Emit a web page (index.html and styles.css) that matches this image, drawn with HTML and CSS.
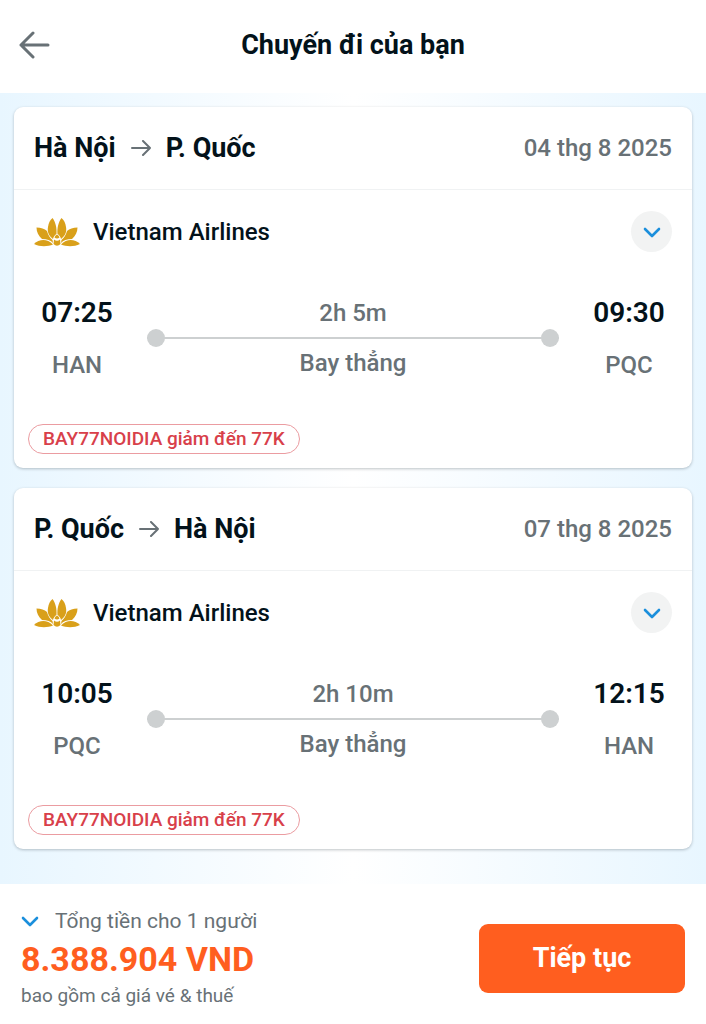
FILE: index.html
```html
<!DOCTYPE html>
<html lang="vi">
<head>
  <meta charset="UTF-8">
  <meta name="viewport" content="width=device-width, initial-scale=1.0">
  <title>Chuyến đi của bạn</title>
  <link rel="stylesheet" href="styles.css">
</head>
<body>
  <!-- shared icons -->
  <svg class="sprite" aria-hidden="true">
    <symbol id="icon-arrow" viewBox="0 0 20 16">
      <path d="M1 8h18M12 1l7 7-7 7" fill="none" stroke="#687176" stroke-width="2" stroke-linecap="round" stroke-linejoin="round"/>
    </symbol>
    <symbol id="icon-chevron" viewBox="0 0 18 12">
      <path d="M2 3l7 7 7-7" fill="none" stroke="#1b8fdc" stroke-width="2.600" stroke-linecap="round" stroke-linejoin="round"/>
    </symbol>
    <symbol id="icon-lotus" viewBox="0 0 46 30">
      <g fill="#d9a01a">
        <path d="M22.500 17C21 18 19.500 19.500 19 22C15 19 13 15 14 10C14.500 6 16 3 18.500 1C21.500 5 23 11 22.500 17Z"/>
        <path d="M23.500 17C25 18 26.500 19.500 27 22C31 19 33 15 32 10C31.500 6 30 3 27.500 1C24.500 5 23 11 23.500 17Z"/>
        <path d="M13 14C14 18 16 21 18.500 23L19 26C17 23.500 13 22 8 22C4.500 19 2.500 15 2.500 10.500C7 10.500 10.500 12 13 14Z"/>
        <path d="M33 14C32 18 30 21 27.500 23L27 26C29 23.500 33 22 38 22C41.500 19 43.500 15 43.500 10.500C39 10.500 35.500 12 33 14Z"/>
        <path d="M0 27C5 22 13 21 19 27.500C14 29.500 6 30 0 27Z"/>
        <path d="M46 27C41 22 33 21 27 27.500C32 29.500 40 30 46 27Z"/>
        <path d="M20 22.500Q23 25 26 22.500L26.500 27Q23 30.500 19.500 27Z"/>
        <path d="M20.500 20.500Q21 18.500 23 17.500Q25 18.500 25.500 20.500Q23 22.500 20.500 20.500Z"/>
      </g>
    </symbol>
  </svg>

  <header class="header">
    <button type="button" class="back-button" aria-label="Quay lại">
      <svg width="32" height="28" viewBox="0 0 32 28">
        <path d="M30 14H3M15 2L3 14l12 12" fill="none" stroke="#687176" stroke-width="3" stroke-linecap="round" stroke-linejoin="round"/>
      </svg>
    </button>
    <h1>Chuyến đi của bạn</h1>
  </header>

  <main class="trips">
    <section class="card">
      <div class="card-head">
        <h2>Hà Nội <svg class="arrow"><use href="#icon-arrow"/></svg> P. Quốc</h2>
        <span class="date">04 thg 8 2025</span>
      </div>
      <div class="airline">
        <svg class="logo"><use href="#icon-lotus"/></svg>
        <span>Vietnam Airlines</span>
        <button type="button" class="expand-button" aria-label="Xem chi tiết">
          <svg class="chevron"><use href="#icon-chevron"/></svg>
        </button>
      </div>
      <div class="route">
        <div class="stop">
          <strong>07:25</strong>
          <span>HAN</span>
        </div>
        <div class="flight">
          <span>2h 5m</span>
          <div class="line"></div>
          <span>Bay thẳng</span>
        </div>
        <div class="stop">
          <strong>09:30</strong>
          <span>PQC</span>
        </div>
      </div>
      <span class="promo">BAY77NOIDIA giảm đến 77K</span>
    </section>

    <section class="card">
      <div class="card-head">
        <h2>P. Quốc <svg class="arrow"><use href="#icon-arrow"/></svg> Hà Nội</h2>
        <span class="date">07 thg 8 2025</span>
      </div>
      <div class="airline">
        <svg class="logo"><use href="#icon-lotus"/></svg>
        <span>Vietnam Airlines</span>
        <button type="button" class="expand-button" aria-label="Xem chi tiết">
          <svg class="chevron"><use href="#icon-chevron"/></svg>
        </button>
      </div>
      <div class="route">
        <div class="stop">
          <strong>10:05</strong>
          <span>PQC</span>
        </div>
        <div class="flight">
          <span>2h 10m</span>
          <div class="line"></div>
          <span>Bay thẳng</span>
        </div>
        <div class="stop">
          <strong>12:15</strong>
          <span>HAN</span>
        </div>
      </div>
      <span class="promo">BAY77NOIDIA giảm đến 77K</span>
    </section>
  </main>

  <footer class="footer">
    <div class="total">
      <button type="button" class="total-toggle">
        <svg class="chevron"><use href="#icon-chevron"/></svg>
        Tổng tiền cho 1 người
      </button>
      <strong class="price">8.388.904 VND</strong>
      <span class="note">bao gồm cả giá vé &amp; thuế</span>
    </div>
    <button type="button" class="continue-button">Tiếp tục</button>
  </footer>
</body>
</html>
```
FILE: styles.css
```css
* {
  box-sizing: border-box;
}
body {
  margin: 0;
  min-height: 100vh;
  display: flex;
  flex-direction: column;
  font-family: Roboto, "Liberation Sans", sans-serif;
  font-size: 24px;
  font-weight: 500;
  color: #03121a;
  background-color: #fff;
}
button {
  padding: 0;
  border: none;
  background: none;
  font: inherit;
  color: inherit;
  cursor: pointer;
}
svg {
  display: block;
  flex-shrink: 0;
}
h1, h2 {
  margin: 0;
  font-size: 27px;
  font-weight: 700;
  line-height: 32px;
}
.sprite {
  width: 0;
  height: 0;
  position: absolute;
}
.header {
  display: grid;
  grid-template-columns: 32px 1fr 32px;
  align-items: center;
  padding: 29px 18px 32px;
}
.header h1 {
  text-align: center;
}
.trips {
  flex: 1;
  display: flex;
  flex-direction: column;
  gap: 20px;
  padding: 14px 14px 33px;
  background: linear-gradient(to right, #e8f6ff, #fff 50%, #e8f6ff);
}
.card {
  padding-bottom: 14px;
  background-color: #fff;
  border-radius: 9px;
  box-shadow: 0 1px 3px rgba(3, 18, 26, 0.25);
}
.card-head {
  display: flex;
  justify-content: space-between;
  align-items: center;
  padding: 25px 20px;
  border-bottom: 1px solid #f0f2f3;
}
.card-head h2 {
  display: flex;
  align-items: center;
  gap: 15px;
}
.arrow {
  width: 20px;
  height: 16px;
}
.date {
  line-height: 32px;
  color: #687176;
}
.airline {
  display: flex;
  align-items: center;
  gap: 13px;
  padding: 21px 20px 0;
}
.logo {
  width: 46px;
  height: 30px;
}
.expand-button {
  display: grid;
  place-items: center;
  width: 41px;
  height: 41px;
  margin-left: auto;
  border-radius: 50%;
  background-color: #f2f3f3;
}
.chevron {
  width: 18px;
  height: 12px;
}
.route {
  display: flex;
  gap: 21px;
  padding: 45px 14px 42px;
  line-height: 32px;
  text-align: center;
  color: #687176;
}
.stop {
  display: flex;
  flex-direction: column;
  gap: 20px;
  width: 98px;
}
.stop strong {
  font-size: 28px;
  font-weight: 600;
  color: #03121a;
}
.flight {
  flex: 1;
}
.flight span {
  display: block;
}
/* line with a dot at each end */
.line {
  display: flex;
  justify-content: space-between;
  align-items: center;
  height: 18px;
  background: linear-gradient(#cdd0d1, #cdd0d1) center / 100% 2px no-repeat;
}
.line::before, .line::after {
  content: "";
  width: 18px;
  height: 18px;
  border-radius: 50%;
  background-color: #cdd0d1;
}
.promo {
  display: inline-block;
  margin-left: 14px;
  padding: 0 14px;
  border: 1px solid #eb9ca1;
  border-radius: 16px;
  font-size: 19px;
  line-height: 28px;
  color: #d8404a;
}
.footer {
  display: flex;
  justify-content: space-between;
  align-items: center;
  padding: 20px 21px 12px;
}
.total {
  display: flex;
  flex-direction: column;
  align-items: flex-start;
}
.total-toggle {
  display: flex;
  align-items: center;
  gap: 16px;
  font-size: 21px;
  font-weight: 400;
  line-height: 34px;
  color: #687176;
}
.price {
  font-size: 34px;
  font-weight: 700;
  line-height: 42px;
  color: #ff5e1f;
}
.note {
  font-size: 19px;
  font-weight: 400;
  line-height: 32px;
  color: #687176;
}
.continue-button {
  width: 206px;
  height: 69px;
  border-radius: 9px;
  background-color: #ff5e1f;
  font-size: 27px;
  font-weight: 700;
  color: #fff;
}
```
